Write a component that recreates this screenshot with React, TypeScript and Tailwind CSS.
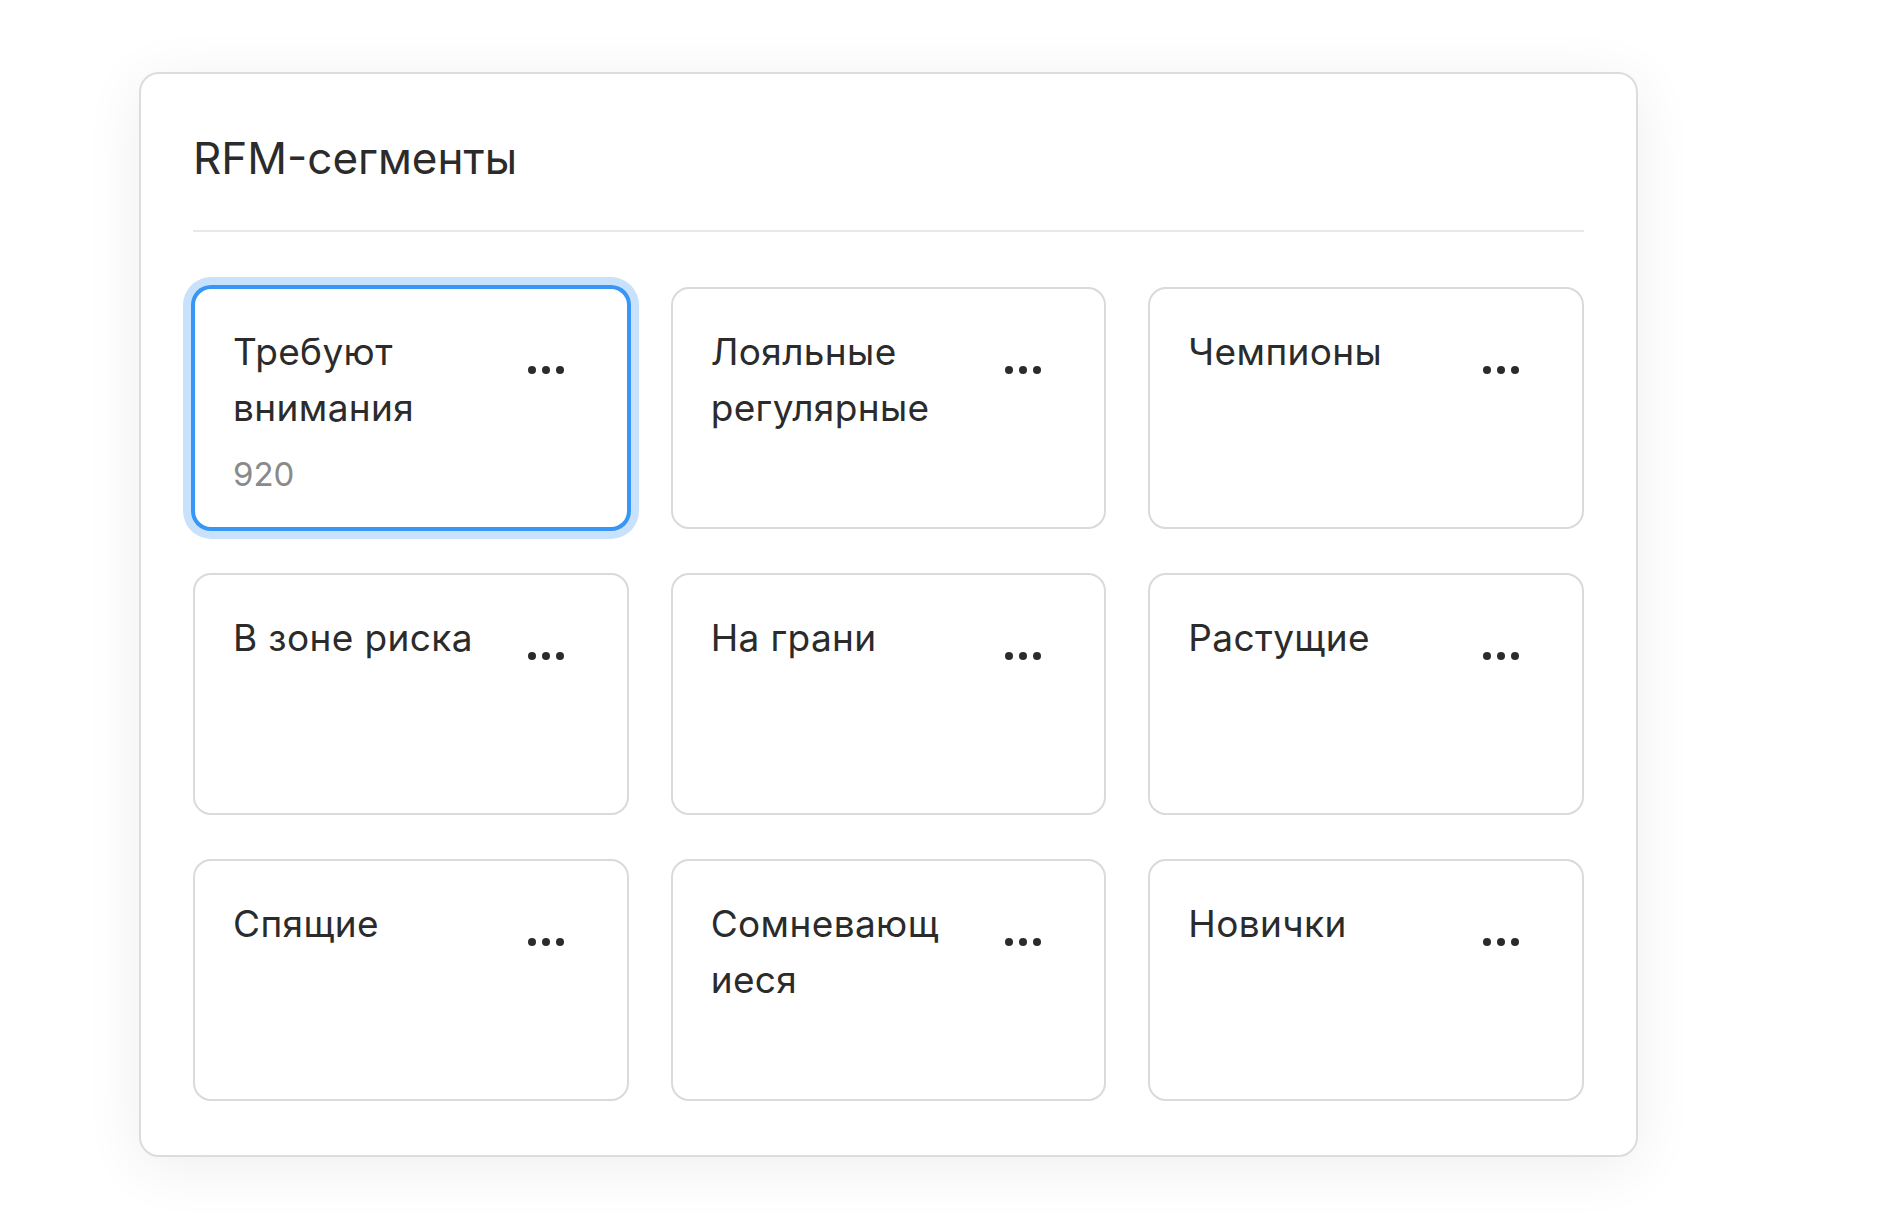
import React from 'react';

interface Segment {
    name: string;
    count?: number;
    selected?: boolean;
}

const segments: Segment[] = [
    { name: 'Требуют внимания', count: 920, selected: true },
    { name: 'Лояльные регулярные' },
    { name: 'Чемпионы' },
    { name: 'В зоне риска' },
    { name: 'На грани' },
    { name: 'Растущие' },
    { name: 'Спящие' },
    { name: 'Сомневающиеся' },
    { name: 'Новички' },
];

const Dots: React.FC = () => (
    <div className="mt-[42px] flex items-center gap-[6px]">
        <span className="h-[8px] w-[8px] rounded-full bg-[#2b2b2b]" />
        <span className="h-[8px] w-[8px] rounded-full bg-[#2b2b2b]" />
        <span className="h-[8px] w-[8px] rounded-full bg-[#2b2b2b]" />
    </div>
);

const SegmentCard: React.FC<{ segment: Segment }> = ({ segment }) => (
    <div
        className={
            segment.selected
                ? 'flex h-[242px] rounded-[18px] border-2 border-[#3897f5] bg-white pl-[38px] pr-[63px] pt-[35px] shadow-[0_0_0_2px_#3897f5,0_0_0_10px_#c9e2fb]'
                : 'flex h-[242px] rounded-[18px] border-2 border-[#dadade] bg-white pl-[38px] pr-[63px] pt-[35px]'
        }
    >
        <div className="w-[245px] break-words">
            <div className="text-[37px] leading-[56px] tracking-[0.01em] text-[#2b2b2b]">{segment.name}</div>
            {segment.count !== undefined && (
                <div className="mt-[18px] text-[33px] leading-[40px] text-[#8a8a8a]">{segment.count}</div>
            )}
        </div>
        <div className="ml-auto">
            <Dots />
        </div>
    </div>
);

export default function App() {
    return (
        <div className="min-h-screen bg-white pl-[139px] pt-[72px] font-[Inter,'Noto_Sans',sans-serif]">
            <div className="w-[1499px] rounded-[20px] border-2 border-[#dcdce0] bg-white px-[52px] pb-[54px] pt-[58px] shadow-[0_10px_60px_rgba(0,0,0,0.07)]">
                <h2 className="text-[44px] font-normal leading-[53px] text-[#2b2b2b]">RFM-сегменты</h2>
                <div className="mt-[45px] h-[2px] bg-[#e8e8ea]" />
                <div className="mt-[55px] grid grid-cols-3 gap-x-[42px] gap-y-[44px]">
                    {segments.map((s) => (
                        <SegmentCard key={s.name} segment={s} />
                    ))}
                </div>
            </div>
        </div>
    );
}
